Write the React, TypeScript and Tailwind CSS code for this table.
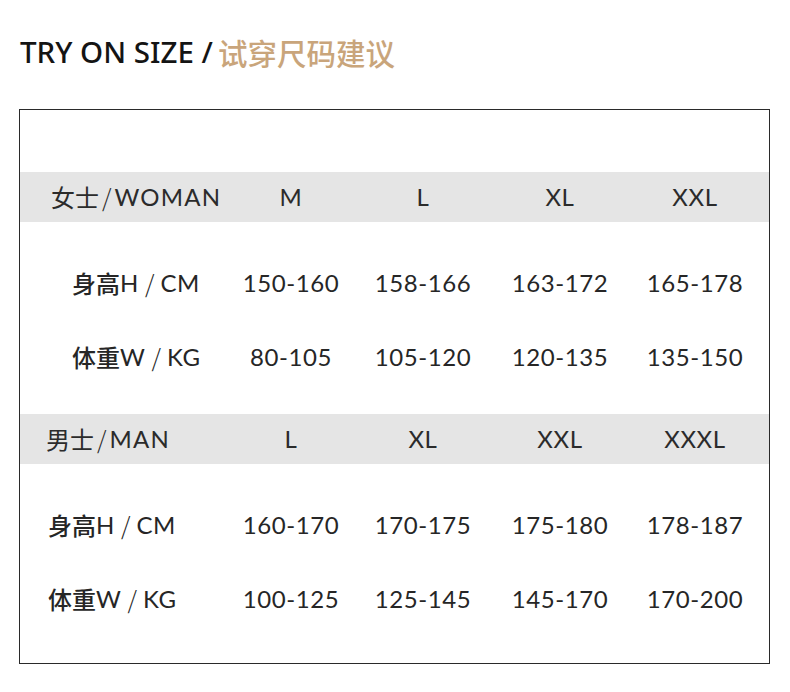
import React from 'react';

const latin = "font-['Lato','Noto_Sans','Noto_Sans_CJK_SC',sans-serif] tracking-[0.6px]";
const cjk = "font-['Noto_Sans_CJK_SC',sans-serif]";

type Section = {
  title: string;
  tag: string;
  headPad: string;
  rowPad: string;
  sizes: string[];
  height: string[];
  weight: string[];
};

const sections: Section[] = [
  {
    title: '女士',
    tag: 'WOMAN',
    headPad: 'pl-[31px]',
    rowPad: 'pl-[52px]',
    sizes: ['M', 'L', 'XL', 'XXL'],
    height: ['150-160', '158-166', '163-172', '165-178'],
    weight: ['80-105', '105-120', '120-135', '135-150'],
  },
  {
    title: '男士',
    tag: 'MAN',
    headPad: 'pl-[26px]',
    rowPad: 'pl-[28px]',
    sizes: ['L', 'XL', 'XXL', 'XXXL'],
    height: ['160-170', '170-175', '175-180', '178-187'],
    weight: ['100-125', '125-145', '145-170', '170-200'],
  },
];

const cols = 'grid grid-cols-[204px_134px_130px_144px_126px] items-center';

function Label({ zh, en, unit }: { zh: string; en: string; unit: string }) {
  return (
    <span className="flex items-center whitespace-nowrap">
      <span className={`${cjk} font-medium`}>{zh}</span>
      <span className={latin}>{en}</span>
      <span className={`${cjk} font-light px-[6px]`}>/</span>
      <span className={latin}>{unit}</span>
    </span>
  );
}

function Block({ s, first }: { s: Section; first: boolean }) {
  return (
    <div className={first ? '' : 'mt-[20px]'}>
      <div className={`${cols} h-[50px] bg-[#e5e5e5] text-[24px] text-[#2b2b2b]`}>
        <div className={`${s.headPad} flex items-center whitespace-nowrap`}>
          <span className={`${cjk} font-normal`}>{s.title}</span>
          <span className={`${cjk} font-light px-[3px]`}>/</span>
          <span className={`${latin} tracking-[1.2px]`}>{s.tag}</span>
        </div>
        {s.sizes.map(v => (
          <div key={v} className={`${latin} text-center`}>{v}</div>
        ))}
      </div>
      <div className="pt-[24px]">
        <div className={`${cols} h-[74px] text-[24px] text-[#262626]`}>
          <div className={s.rowPad}><Label zh="身高" en="H" unit="CM" /></div>
          {s.height.map(v => (
            <div key={v} className={`${latin} text-center`}>{v}</div>
          ))}
        </div>
        <div className={`${cols} h-[74px] text-[24px] text-[#262626]`}>
          <div className={s.rowPad}><Label zh="体重" en="W" unit="KG" /></div>
          {s.weight.map(v => (
            <div key={v} className={`${latin} text-center`}>{v}</div>
          ))}
        </div>
      </div>
    </div>
  );
}

export default function App() {
  return (
    <div className="w-[790px] h-[692px] bg-white">
      <div className="pl-[20px] pt-[31px] h-[109px] flex items-start text-[29.5px] leading-[42px]">
        <span className="font-['Noto_Sans',sans-serif] font-medium text-[#141414] whitespace-nowrap">
          TRY ON SIZE /
        </span>
        <span className={`${cjk} font-medium text-[#c9a57b] ml-[5px] whitespace-nowrap`}>
          试穿尺码建议
        </span>
      </div>
      <div className="ml-[19px] w-[751px] h-[555px] border border-[#2a2a2a] pt-[62px]">
        {sections.map((s, i) => (
          <Block key={s.tag} s={s} first={i === 0} />
        ))}
      </div>
    </div>
  );
}
